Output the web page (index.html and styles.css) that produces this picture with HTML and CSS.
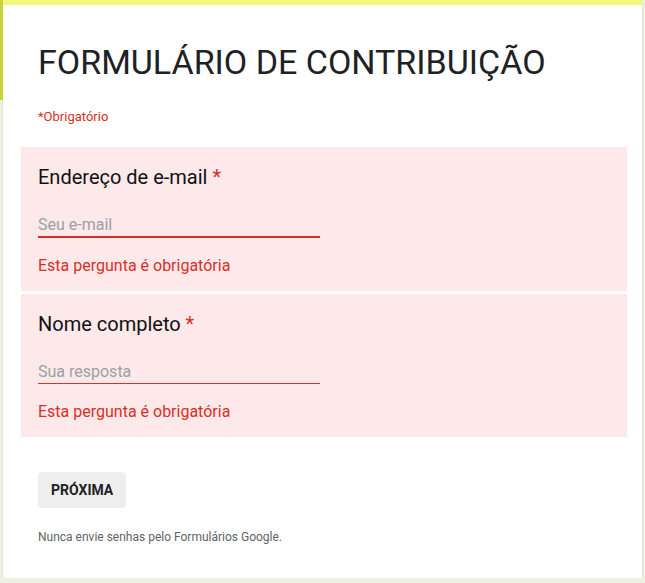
FILE: index.html
```html
<!DOCTYPE html>
<html>
<head>
  <meta charset="UTF-8">
  <title>Formulário de contribuição</title>
  <link rel="stylesheet" href="styles.css">
</head>
<body>
  <div class="form-card">
    <div class="form-header">
      <h1>FORMULÁRIO DE CONTRIBUIÇÃO</h1>
      <p class="required-note">*Obrigatório</p>
    </div>

    <div class="question error">
      <div class="question-title">Endereço de e-mail <span class="star">*</span></div>
      <input type="text" class="answer thick" placeholder="Seu e-mail">
      <div class="error-message">Esta pergunta é obrigatória</div>
    </div>

    <div class="question error">
      <div class="question-title">Nome completo <span class="star">*</span></div>
      <input type="text" class="answer" placeholder="Sua resposta">
      <div class="error-message">Esta pergunta é obrigatória</div>
    </div>

    <div class="form-footer">
      <button class="next-button">PRÓXIMA</button>
      <p class="hint">Nunca envie senhas pelo Formulários Google.</p>
    </div>
  </div>
</body>
</html>
```

FILE: styles.css
```css
body {
  margin: 0;
  background-color: #eef0e2;
  font-family: Roboto, Arial, sans-serif;
}
.form-card {
  position: relative;
  margin: 0 3px;
  height: 578px;
  box-sizing: border-box;
  background-color: #fff;
  border-top: 5px solid #f3f87c;
  box-shadow: 0 1px 2px rgba(0,0,0,0.15);
}
/* left highlight on header */
.form-card::before {
  content: "";
  position: absolute;
  left: -3px;
  top: -5px;
  width: 3px;
  height: 100px;
  background-color: #c7d43a;
}
.form-header {
  padding: 37px 35px 0;
}
h1 {
  margin: 0;
  font-size: 34px;
  font-weight: 400;
  color: #202124;
  letter-spacing: 0;
}
.required-note {
  margin: 27px 0 23px;
  font-size: 13px;
  color: #d93025;
}
.question {
  margin: 0 15px 3px 18px;
  padding: 18px 17px 16px;
  background-color: #fde8ea;
}
.question-title {
  font-size: 20px;
  color: #111;
}
.star {
  color: #d93025;
}
.answer {
  display: block;
  width: 282px;
  margin-top: 26px;
  padding: 0 0 2px;
  border: none;
  border-bottom: 1px solid #d93025;
  background: transparent;
  font-family: Roboto, Arial, sans-serif;
  font-size: 16px;
  color: #202124;
  outline: none;
}
.answer.thick {
  border-bottom-width: 2px;
}
.answer::placeholder {
  color: #9aa0a6;
}
.error-message {
  margin-top: 18px;
  font-size: 16px;
  color: #d93025;
}
.form-footer {
  padding: 32px 35px 0;
}
.next-button {
  height: 36px;
  padding: 0 13px;
  border: none;
  border-radius: 4px;
  background-color: #eeeeee;
  font-family: Roboto, Arial, sans-serif;
  font-size: 14px;
  font-weight: 700;
  color: #202124;
  cursor: pointer;
}
.hint {
  margin: 22px 0 0;
  font-size: 12px;
  color: #5f6368;
}
```
